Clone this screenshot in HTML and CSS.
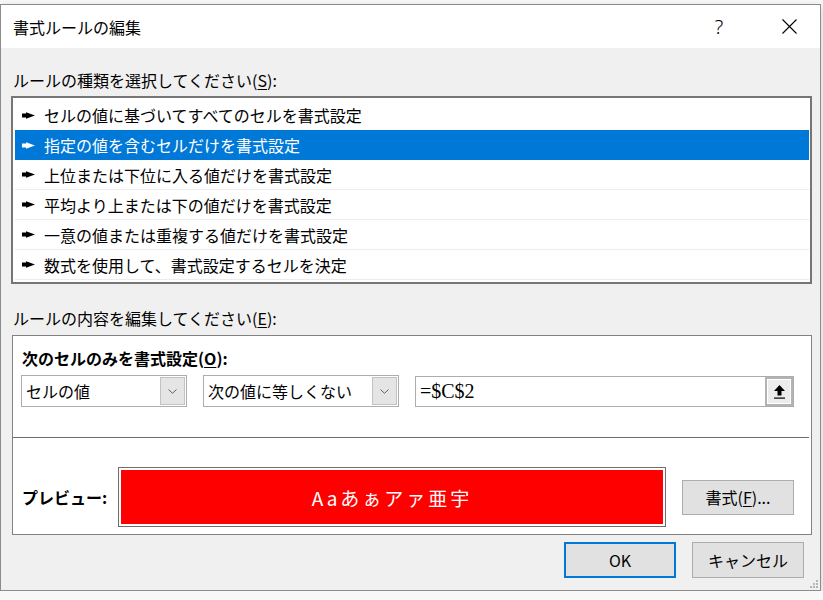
FILE: index.html
```html
<!DOCTYPE html>
<html lang="ja">
<head>
    <meta charset="UTF-8">
    <meta name="viewport" content="width=device-width, initial-scale=1.0">
    <title>書式ルールの編集</title>
    <link rel="stylesheet" href="styles.css">
</head>
<body>
    <div class="window">
        <div class="titlebar">
            <span class="title">書式ルールの編集</span>
            <span class="help">?</span>
            <span class="close">
                <svg width="15" height="15" viewBox="0 0 15 15"><path d="M0.5 0.5 L14.5 14.5 M14.5 0.5 L0.5 14.5" stroke="#000" stroke-width="1.1" fill="none"/></svg>
            </span>
        </div>

        <div class="body">
            <div class="label label-type">ルールの種類を選択してください(<u>S</u>):</div>
            <div class="listbox">
                <div class="item"><svg class="arrow" viewBox="0 0 13 7"><path d="M0 1.5 L4 1.5 L4 0.2 L13 3.5 L4 6.8 L4 5.5 L0 5.5 Z"/></svg>セルの値に基づいてすべてのセルを書式設定</div>
                <div class="item selected"><svg class="arrow" viewBox="0 0 13 7"><path d="M0 1.5 L4 1.5 L4 0.2 L13 3.5 L4 6.8 L4 5.5 L0 5.5 Z"/></svg>指定の値を含むセルだけを書式設定</div>
                <div class="item sep"><svg class="arrow" viewBox="0 0 13 7"><path d="M0 1.5 L4 1.5 L4 0.2 L13 3.5 L4 6.8 L4 5.5 L0 5.5 Z"/></svg>上位または下位に入る値だけを書式設定</div>
                <div class="item sep"><svg class="arrow" viewBox="0 0 13 7"><path d="M0 1.5 L4 1.5 L4 0.2 L13 3.5 L4 6.8 L4 5.5 L0 5.5 Z"/></svg>平均より上または下の値だけを書式設定</div>
                <div class="item sep"><svg class="arrow" viewBox="0 0 13 7"><path d="M0 1.5 L4 1.5 L4 0.2 L13 3.5 L4 6.8 L4 5.5 L0 5.5 Z"/></svg>一意の値または重複する値だけを書式設定</div>
                <div class="item sep"><svg class="arrow" viewBox="0 0 13 7"><path d="M0 1.5 L4 1.5 L4 0.2 L13 3.5 L4 6.8 L4 5.5 L0 5.5 Z"/></svg>数式を使用して、書式設定するセルを決定</div>
            </div>

            <div class="label label-edit">ルールの内容を編集してください(<u>E</u>):</div>
            <div class="panel">
                <div class="panel-title">次のセルのみを書式設定(<u>O</u>):</div>
                <div class="criteria">
                    <div class="combo combo-type">
                        <span class="combo-text">セルの値</span>
                        <span class="combo-btn"><svg width="9" height="5" viewBox="0 0 9 5"><path d="M0.5 0.5 L4.5 4.3 L8.5 0.5" stroke="#606060" stroke-width="1" fill="none"/></svg></span>
                    </div>
                    <div class="combo combo-op">
                        <span class="combo-text">次の値に等しくない</span>
                        <span class="combo-btn"><svg width="9" height="5" viewBox="0 0 9 5"><path d="M0.5 0.5 L4.5 4.3 L8.5 0.5" stroke="#606060" stroke-width="1" fill="none"/></svg></span>
                    </div>
                    <div class="refedit">
                        <span class="ref-text">=$C$2</span>
                        <span class="ref-btn">
                            <svg width="11" height="14" viewBox="0 0 11 14"><path d="M5.5 0 L11 6 L7.5 6 L7.5 10.5 L3.5 10.5 L3.5 6 L0 6 Z" fill="#000"/><rect x="0" y="12.5" width="11" height="1.2" fill="#000"/></svg>
                        </span>
                    </div>
                </div>
                <div class="divider"></div>
                <div class="preview-row">
                    <div class="preview-label">プレビュー:</div>
                    <div class="preview-box">
                        <div class="preview-fill">Aaあぁアァ亜宇</div>
                    </div>
                    <button class="btn btn-format">書式(<u>F</u>)...</button>
                </div>
            </div>

            <div class="actions">
                <button class="btn btn-ok">OK</button>
                <button class="btn">キャンセル</button>
            </div>
        </div>

        <svg class="grip" width="10" height="10" viewBox="0 0 10 10">
            <rect x="7" y="1" width="2" height="2" fill="#b5b5b5"/>
            <rect x="4" y="4" width="2" height="2" fill="#b5b5b5"/>
            <rect x="7" y="4" width="2" height="2" fill="#b5b5b5"/>
            <rect x="1" y="7" width="2" height="2" fill="#b5b5b5"/>
            <rect x="4" y="7" width="2" height="2" fill="#b5b5b5"/>
            <rect x="7" y="7" width="2" height="2" fill="#b5b5b5"/>
        </svg>
    </div>
</body>
</html>
```

FILE: styles.css
```css
body {
    margin: 0;
    background-color: #f8f8f8;
    font-family: "Noto Sans CJK JP", "Noto Sans", sans-serif;
    color: #000;
}
u {
    text-underline-offset: 2px;
}
.window {
    position: relative;
    box-sizing: border-box;
    width: 821px;
    height: 587px;
    margin-top: 4px;
    border: 1px solid #8c8c8c;
    background-color: #f0f0f0;
    box-shadow: 0 3px 8px rgba(0,0,0,0.18);
}
.titlebar {
    display: flex;
    align-items: center;
    height: 43px;
    padding: 0 8px 0 12px;
    background-color: #fff;
}
.title {
    font-size: 16px;
    line-height: 20px;
}
.help {
    margin-left: auto;
    width: 46px;
    text-align: center;
    font-size: 20px;
    line-height: 22px;
    font-family: "Noto Sans", sans-serif;
    font-weight: 300;
}
.close {
    display: flex;
    justify-content: center;
    width: 46px;
    margin-left: 24px;
}
.body {
    padding: 22px 0 0 10px;
}
.label {
    margin-left: 2px;
    font-size: 16px;
    line-height: 20px;
}
.label-type {
    margin-bottom: 6px;
}
.label-edit {
    margin-top: 24px;
    margin-bottom: 7px;
}
.listbox {
    box-sizing: border-box;
    width: 801px;
    padding: 2px 1px 2px 2px;
    border: 2px solid #767676;
    background-color: #fff;
}
.item {
    display: flex;
    align-items: center;
    box-sizing: border-box;
    height: 30px;
    font-size: 16px;
    line-height: 30px;
    white-space: nowrap;
}
.item.sep {
    border-bottom: 1px solid #ececec;
}
.item.selected {
    background-color: #0078d7;
    color: #fff;
}
.arrow {
    width: 13px;
    height: 7px;
    margin: 0 9px 0 7px;
    fill: #000;
}
.selected .arrow {
    fill: #fff;
}
.panel {
    box-sizing: border-box;
    width: 800px;
    height: 200px;
    margin-left: 1px;
    padding: 12px 8px 7px 8px;
    border: 1px solid #828282;
    background-color: #fff;
}
.panel-title {
    font-size: 16px;
    font-weight: bold;
    line-height: 20px;
    margin-bottom: 7px;
    padding-left: 1px;
}
.criteria {
    display: flex;
    gap: 16px;
    height: 32px;
}
.combo {
    display: flex;
    align-items: center;
    box-sizing: border-box;
    height: 32px;
    padding-left: 4px;
    border: 1px solid #adadad;
    background-color: #fff;
    font-size: 16px;
}
.combo-type {
    width: 166px;
}
.combo-op {
    width: 196px;
}
.combo-btn {
    display: flex;
    align-items: center;
    justify-content: center;
    box-sizing: border-box;
    width: 25px;
    height: 28px;
    margin-left: auto;
    margin-right: 1px;
    border: 1px solid #c2c2c2;
    background-color: #e5e5e5;
}
.refedit {
    display: flex;
    align-items: center;
    box-sizing: border-box;
    width: 379px;
    height: 31px;
    margin-top: 1px;
    padding-left: 4px;
    border: 1px solid #adadad;
    background-color: #fff;
}
.ref-text {
    font-family: "Liberation Serif", serif;
    font-size: 20px;
}
.ref-btn {
    display: flex;
    align-items: center;
    justify-content: center;
    box-sizing: border-box;
    width: 28px;
    height: 29px;
    margin-left: auto;
    border: 2px solid #b3b3b3;
    background-color: #ececec;
    box-shadow: inset 0 0 0 1px #fff;
}
.divider {
    height: 1px;
    margin: 30px -6px 0 -8px;
    background-color: #6e6e6e;
}
.preview-row {
    display: flex;
    align-items: center;
    margin-top: 29px;
    height: 60px;
}
.preview-label {
    width: 97px;
    padding-left: 1px;
    box-sizing: border-box;
    font-size: 16px;
    font-weight: bold;
}
.preview-box {
    box-sizing: border-box;
    width: 548px;
    height: 60px;
    padding: 2px;
    border: 1px solid #6e6e6e;
    background-color: #fff;
}
.preview-fill {
    display: flex;
    align-items: center;
    justify-content: center;
    height: 100%;
    background-color: #ff0000;
    color: #fff;
    font-size: 19px;
    letter-spacing: 3px;
}
.btn {
    box-sizing: border-box;
    width: 112px;
    height: 36px;
    padding: 0;
    border: 1px solid #adadad;
    background-color: #e1e1e1;
    font-family: "Noto Sans CJK JP", "Noto Sans", sans-serif;
    font-size: 16px;
    color: #000;
}
.btn-format {
    height: 35px;
    margin-left: 16px;
}
.btn-ok {
    border: 2px solid #0078d7;
}
.actions {
    display: flex;
    justify-content: flex-end;
    gap: 16px;
    margin-top: 7px;
    padding-right: 16px;
}
.grip {
    position: absolute;
    right: 1px;
    bottom: 1px;
}
```
